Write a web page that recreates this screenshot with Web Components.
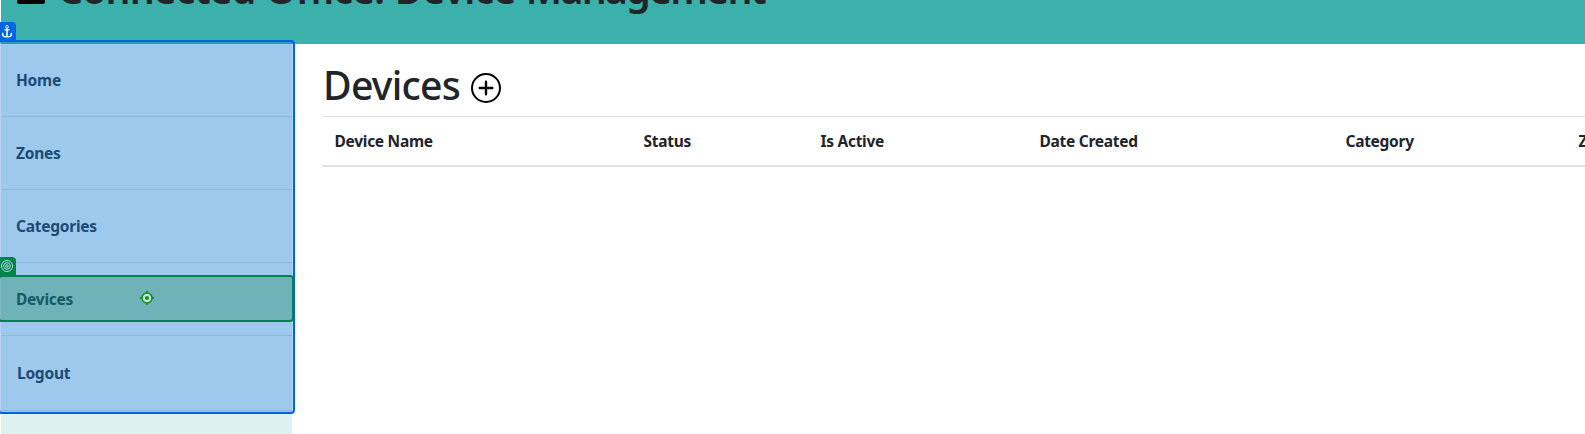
<!DOCTYPE html>
<html lang="en">
<head>
<meta charset="utf-8">
<title>Connected Office: Device Management</title>
<style>
html,body{margin:0;height:100%;overflow:hidden;background:#fff}
body{font-family:"Noto Sans","Open Sans",sans-serif;color:#212529;font-size:15.5px}
</style>
</head>
<body>
<office-app></office-app>
<script>
const define = (name, html) => customElements.define(name, class extends HTMLElement {
  constructor() {
    super();
    const t = document.createElement('template');
    t.innerHTML = html;
    this.attachShadow({ mode: 'open' }).appendChild(t.content.cloneNode(true));
  }
});

define('app-header', `
<style>
:host{display:flex;height:44px;margin-left:1px;background:#3cb0aa;overflow:hidden;align-items:flex-end}
svg{flex:none;display:block;margin:0 0 40px 16px}
.t{font-size:39.2px;line-height:54px;font-weight:600;letter-spacing:-.85px;word-spacing:1px;white-space:nowrap;margin:0 0 28px 13px}
::slotted(span){letter-spacing:-1.7px}
</style>
<svg width="28" height="28" viewBox="0 0 28 28"><rect x="0" y="3" width="28" height="25" rx="2.5"/></svg>
<div class="t"><slot></slot></div>`);

define('nav-item', `
<style>
:host{display:flex;box-sizing:border-box;height:73px;align-items:center;padding:0 0 0 15px;border-bottom:1px solid #c7dad8;color:#2c3e48;font-weight:700;letter-spacing:-.24px;line-height:24px;white-space:nowrap}
:host([last]){height:75px;padding-left:16px;padding-top:0}
</style>
<span><slot></slot></span>`);

define('pick-frame', `
<style>
:host{display:block;position:absolute;box-sizing:border-box;border:2px solid var(--line);background:var(--tint);background-clip:padding-box;border-radius:4px}
.b{position:absolute;left:0;top:-20px;width:16px;height:19px;box-sizing:border-box;background:var(--line);border-radius:0 4px 0 0;padding:3px 0 0 1px}
::slotted(svg){display:block}
</style>
<div class="b"><slot></slot></div>`);

define('side-nav', `
<style>
:host{display:block;position:relative;box-sizing:border-box;width:292px;height:390px;padding-left:1px;background:linear-gradient(#ddf2f0,#ddf2f0) 1px 0 no-repeat}
.blue{--line:#0065e0;--tint:rgba(0,101,228,.29);left:-2px;top:-4px;width:297px;height:374px}
.green{--line:#03824b;--tint:rgba(5,127,63,.3);left:-2px;top:231px;width:296px;height:47px}
.aim{position:absolute;left:140px;top:247px}
</style>
<nav-item>Home</nav-item><nav-item>Zones</nav-item><nav-item>Categories</nav-item><nav-item>Devices</nav-item><nav-item last>Logout</nav-item>
<pick-frame class="blue"><svg width="12" height="13" viewBox="0 0 12 13" fill="none" stroke="#fff" stroke-width="1.2"><circle cx="6" cy="1.9" r="1.4" stroke-width=".9"/><path d="M6 3.400V12" stroke-width="1.600"/><path d="M3.500 4.800h5M1.200 9.200C1.700 10.800 3.500 12 6 12s4.300-1.200 4.800-2.800"/><path d="M1 10.200V7.200l2.200 2zM11 10.200V7.200l-2.200 2z" fill="#fff" stroke="none"/></svg></pick-frame>
<pick-frame class="green"><svg width="12" height="13" viewBox="0 0 12 13" fill="none" stroke="#a8dce0"><circle cx="6" cy="6" r="5.500" stroke-width="1"/><circle cx="6" cy="6" r="3.300" stroke-width="1"/><circle cx="6" cy="6" r="1.300" stroke-width="1"/></svg></pick-frame>
<svg class="aim" width="14" height="14" viewBox="0 0 14 14"><path d="M7 0v14M0 7h14" stroke="#109020" stroke-width="1.800"/><circle cx="7" cy="7" r="5" fill="#c4e7dc" stroke="#109020" stroke-width="1.500"/><circle cx="7" cy="7" r="2" fill="#109020"/></svg>`);

define('page-title', `
<style>
:host{display:flex;height:72px;align-items:flex-start;padding-left:1px}
h1{margin:14px 0 0;font-size:39.2px;line-height:54px;font-weight:500;white-space:nowrap;width:148px;letter-spacing:-.75px}
svg{display:block;flex:none;margin-top:29px}
</style>
<h1><slot></slot></h1>
<svg width="30" height="30" viewBox="0 0 30 30" fill="none" stroke="#000" stroke-linecap="round"><circle cx="15" cy="15" r="14" stroke-width="2"/><path d="M15 8.700v12.600M8.700 15h12.600" stroke-width="2.400"/></svg>`);

define('device-table', `
<style>
:host{display:grid;grid-template-columns:309px 177px 219px 306px 233px 200px;width:1444px;box-sizing:border-box;height:51px;border-top:1px solid #dee2e6;border-bottom:2px solid #dee2e6;font-weight:700;letter-spacing:-.28px;line-height:24px}
::slotted(div){padding:12px 0 12px 12.500px;white-space:nowrap}
</style>
<slot></slot>`);

define('office-app', `
<style>
:host{display:block;height:434px;overflow:hidden}
.row{display:flex}
side-nav{flex:none}
main{flex:1;min-width:0;margin-left:30px}
</style>
<app-header>Connected Office: Device <span>Management</span></app-header>
<div class="row"><side-nav></side-nav>
<main><page-title>Devices</page-title>
<device-table><div>Device Name</div><div>Status</div><div>Is Active</div><div>Date Created</div><div>Category</div><div>Zone</div></device-table></main></div>`);
</script>
</body>
</html>
